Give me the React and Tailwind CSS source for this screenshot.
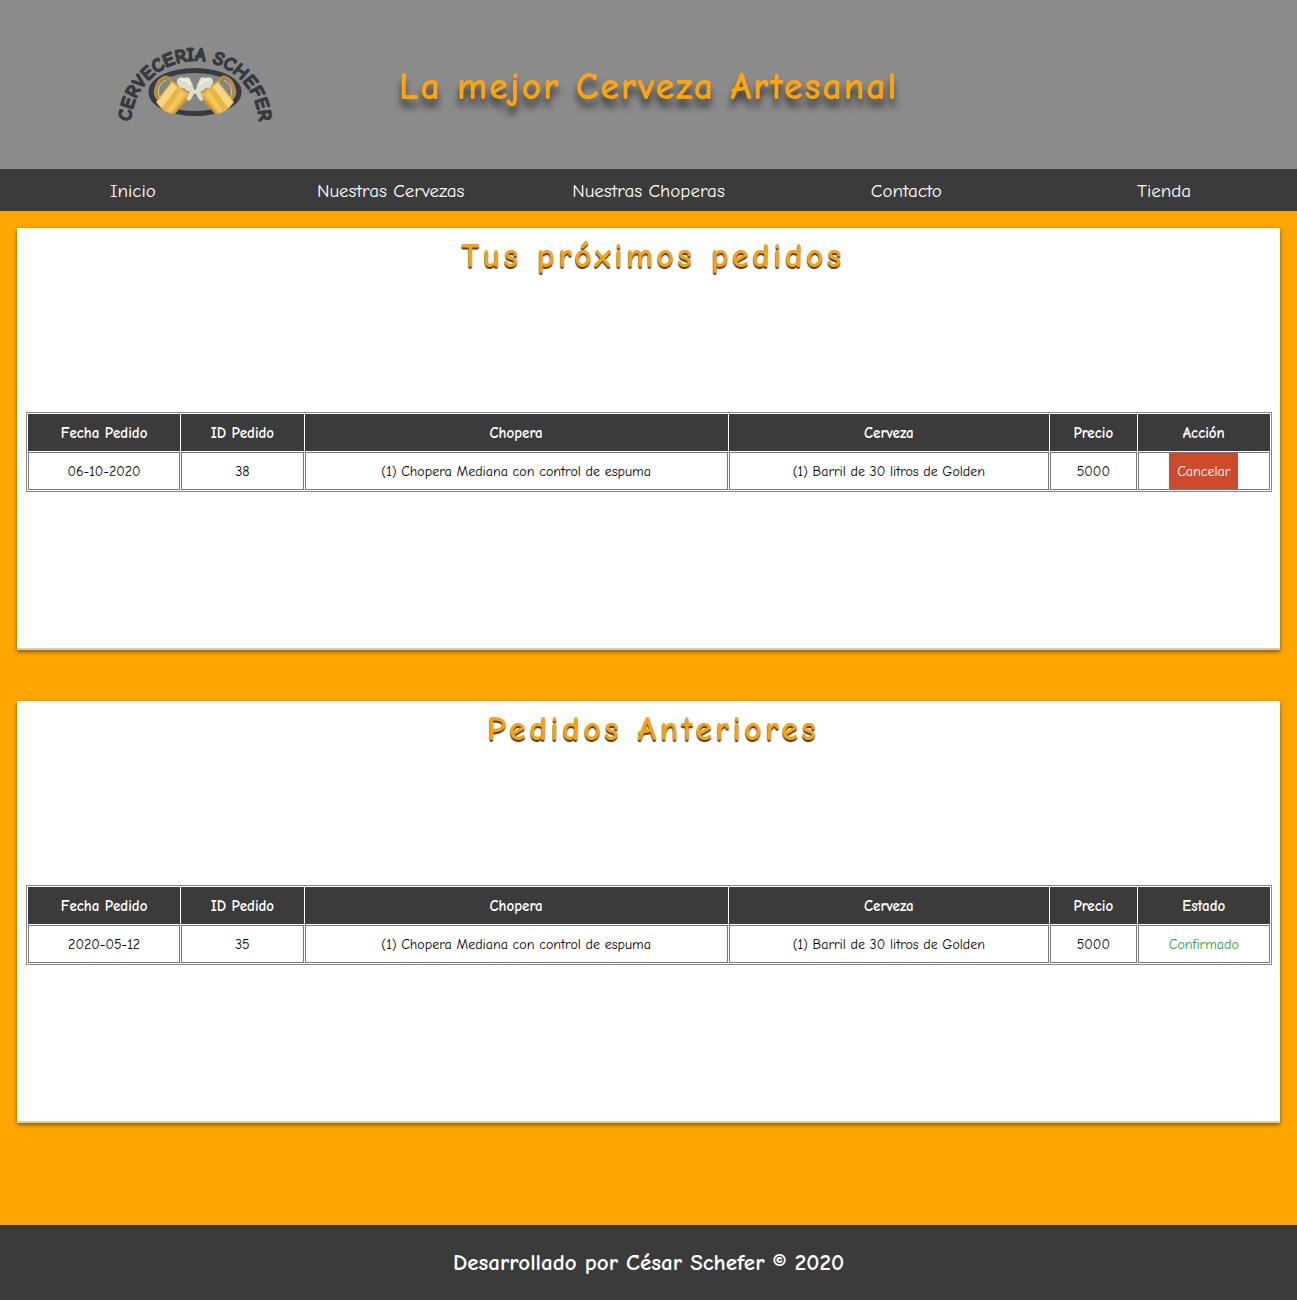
const links = ['Inicio', 'Nuestras Cervezas', 'Nuestras Choperas', 'Contacto', 'Tienda'];

function Mug() {
  return (
    <g>
      <path d="M58 69 C53 61 57 49 66 47 C69 47 71 50 72 54" fill="none" stroke="#b78e3d" strokeWidth="3" />
      <path d="M60 68 C56 61 60 52 66 50" fill="none" stroke="#efca73" strokeWidth="1" />
      <path d="M72 51 L91 65 L74 84 Q64 84 56 72 Z" fill="#e8b647" />
      <path d="M72 53 L77 57 L62 78 L57 72 Z" fill="#f5d582" />
      <path d="M81 61 L85 64 L71 82 L67 81 Z" fill="#f4c75c" />
      <path d="M88 65 L91 66 L75 84 L72 84 Z" fill="#cc9836" />
      <path
        d="M77 53 C76 48 81 46 84 48 C88 46 91 48 91 52 C94 54 92 58 95 60 L95 64 C93 63 93 67 91 69 C90 72 86 71 87 68 C88 65 90 64 89 61 C87 62 85 59 84 58 C80 59 79 56 77 53 Z"
        fill="#dfddcb"
      />
      <path d="M81 50 Q88 49 90 55" fill="none" stroke="#f4f1df" strokeWidth="2" />
    </g>
  );
}

function Logo() {
  return (
    <svg viewBox="0 0 190 110" className="h-[110px] w-[190px]" role="img" aria-label="Cervecería Schefer">
      <defs>
        <path id="logo-arc" d="M31 94 A64 63 0 0 1 159 94" />
      </defs>
      <ellipse cx="95" cy="62" rx="44" ry="21.5" fill="#858585" stroke="#373a3e" strokeWidth="5" />
      <Mug />
      <g transform="translate(190 0) scale(-1 1)">
        <Mug />
      </g>
      <text
        fill="#373a3e"
        stroke="#373a3e"
        strokeWidth="1.4"
        fontSize="19"
        fontWeight="700"
        textAnchor="middle"
        fontFamily="'Comic Sans MS', 'Comic Neue', 'Liberation Sans', sans-serif"
      >
        <textPath href="#logo-arc" startOffset="50%">CERVECERIA SCHEFER</textPath>
      </text>
    </svg>
  );
}

function Orders({ title, lastHeader, date, id, action }) {
  return (
    <section className="min-h-[422px] bg-white pr-2 pl-[9px] shadow-[0_2px_4px_rgba(50,40,20,0.6),inset_0_-2px_0_#dccba8]">
      <h2 className="pt-1 pl-2 text-center text-[34px] leading-[48px] font-bold tracking-widest text-[#f5a11a] [text-shadow:0_2px_1px_#4a3a20]">
        {title}
      </h2>
      <table className="mt-[132px] w-full table-fixed border-separate border-spacing-px border border-[#8a8587] text-center text-sm">
        <colgroup>
          <col className="w-[12.3%]" />
          <col className="w-[9.9%]" />
          <col className="w-[34.2%]" />
          <col className="w-[25.9%]" />
          <col className="w-[7%]" />
          <col className="w-[10.7%]" />
        </colgroup>
        <thead className="bg-[#3b3b3b] text-[15px] text-white">
          <tr className="h-[37px]">
            {['Fecha Pedido', 'ID Pedido', 'Chopera', 'Cerveza', 'Precio', lastHeader].map((h) => (
              <th key={h} scope="col" className="border border-[#3b3b3b] p-0 pt-0.5 font-bold">{h}</th>
            ))}
          </tr>
        </thead>
        <tbody className="text-black">
          <tr className="h-[38px]">
            {[date, id, '(1) Chopera Mediana con control de espuma', '(1) Barril de 30 litros de Golden', '5000'].map((v) => (
              <td key={v} className="border border-[#77777b] p-0 pt-0.5">{v}</td>
            ))}
            <td className="border border-[#77777b] p-0">{action}</td>
          </tr>
        </tbody>
      </table>
    </section>
  );
}

export default function App() {
  return (
    <div className="flex min-h-screen flex-col bg-[#ffa500] font-['Comic_Sans_MS','Comic_Neue','Noto_Sans',sans-serif]">
      <header className="grid h-[169px] grid-cols-[30%_1fr_30%] items-center bg-[#8b8b8b]">
        <div className="flex justify-center">
          <Logo />
        </div>
        <h1 className="pt-1 text-center text-[38px] leading-[48px] font-bold tracking-wider whitespace-nowrap text-[#ffa50a] [text-shadow:0_8px_7px_#333]">
          La mejor Cerveza Artesanal
        </h1>
      </header>
      <nav className="grid h-[42px] grid-cols-5 items-center bg-[#3b3b3b] px-1 pt-0.5 text-center text-[19px] text-white">
        {links.map((l) => (
          <a key={l} href="#">{l}</a>
        ))}
      </nav>
      <main className="flex flex-1 flex-col gap-[51px] px-[17px] pt-[17px] pb-[102px]">
        <Orders
          title="Tus próximos pedidos"
          lastHeader="Acción"
          date="06-10-2020"
          id="38"
          action={<button type="button" className="mx-auto block h-9 bg-[#cd4a2c] px-2 pt-0.5 text-white">Cancelar</button>}
        />
        <Orders
          title="Pedidos Anteriores"
          lastHeader="Estado"
          date="2020-05-12"
          id="35"
          action={<span className="block pt-0.5 text-[#2e9a3a]">Confirmado</span>}
        />
      </main>
      <footer className="flex h-[75px] items-center justify-center bg-[#3b3b3b] pt-0.5 text-[23px] font-bold text-white">
        Desarrollado por César Schefer © 2020
      </footer>
    </div>
  );
}
